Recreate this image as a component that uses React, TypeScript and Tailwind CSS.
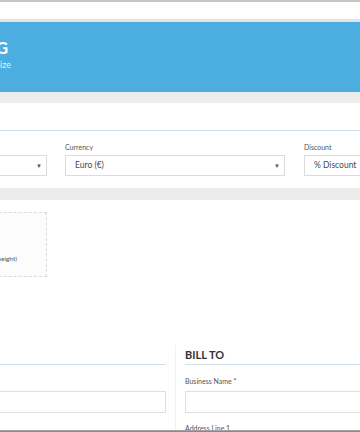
import React from "react";

const font = { fontFamily: "Lato, 'Open Sans', sans-serif" };

const Select = ({ value, width }: { value: string; width: string }) => (
  <div className={`flex h-[21px] ${width} items-center justify-between border border-[#dcdcdc] bg-white pl-[9px] pr-[4px]`}>
    <span className="text-[8.5px] text-[#4a4a4a]">{value}</span>
    <span className="text-[6px] leading-none text-[#555]">▼</span>
  </div>
);

const Field = ({ label }: { label: string }) => (
  <div className="flex flex-col">
    <span className="mb-[5px] text-[7px] leading-[9px] text-[#555]">{label}</span>
    <div className="h-[22px] w-full border border-[#e0e0e0] bg-white" />
  </div>
);

export default function App() {
  return (
    <div className="flex h-[432px] w-[360px] flex-col overflow-hidden bg-white" style={font}>
      <div className="flex-1 overflow-hidden">
        <div className="h-[19px] border-t-2 border-[#c6c6c8] bg-white" />
        <div className="h-[3px] bg-[#e4e4e4]" />

        {/* header band */}
        <div className="h-[70px] bg-[#4badE0] pt-[17px]">
          <div className="ml-[-120px] w-[200px] text-right">
            <div className="pr-[72px] text-[17px] font-bold leading-[18px] text-white">INVOICING</div>
            <div className="mt-[3px] pr-[69px] text-[9px] leading-[10px] text-[#e3f3fb]">Create &amp; organize</div>
          </div>
        </div>

        <div className="h-[11px] bg-[#ececec]" />

        <div className="ml-[-200px] w-[760px]">
          {/* settings */}
          <div className="h-[28px] border-b border-[#cfe1e8]" />
          <div className="flex gap-[18px] pl-[27px] pt-[12px]">
            <div className="flex flex-col">
              <span className="mb-[4px] text-[7px] leading-[8px] text-[#555]">Language</span>
              <Select value="English" width="w-[220px]" />
            </div>
            <div className="flex flex-col">
              <span className="mb-[4px] text-[7px] leading-[8px] text-[#555]">Currency</span>
              <Select value="Euro (€)" width="w-[220px]" />
            </div>
            <div className="ml-[1px] flex flex-col">
              <span className="mb-[4px] text-[7px] leading-[8px] text-[#555]">Discount</span>
              <Select value="% Discount" width="w-[220px]" />
            </div>
          </div>
          <div className="h-[12px]" />
          <div className="h-[12px] bg-[#ececec]" />

          {/* logo */}
          <div className="pl-[27px] pt-[12px]">
            <div className="flex h-[65px] w-[220px] items-end justify-end border border-dashed border-[#dadada] bg-[#fcfcfc] pb-[12px] pr-[29px]">
              <span className="text-[6.5px] text-[#555]">(max 300px width/height)</span>
            </div>
          </div>

          {/* from / bill to */}
          <div className="mt-[68px] flex pl-[26px]">
            <div className="w-[340px]">
              <div className="h-[19px] text-[11px] font-bold text-[#333]">FROM</div>
              <div className="border-b border-[#cfe1e8]" />
              <div className="mt-[12px]">
                <Field label="Business Name *" />
              </div>
            </div>
            <div className="ml-[9px] w-[360px] border-l border-[#f1f1f1] pl-[9px] pr-[10px]">
              <div className="h-[19px] text-[11px] font-bold leading-[19px] text-[#333]">BILL TO</div>
              <div className="border-b border-[#cfe1e8]" />
              <div className="mt-[12px]">
                <Field label="Business Name *" />
              </div>
              <div className="mt-[11px] text-[7px] leading-[9px] text-[#555]">Address Line 1</div>
            </div>
          </div>
        </div>
      </div>
      <div className="h-[2px] bg-gradient-to-b from-[#b0b0b0] to-[#7c7c7c]" />
    </div>
  );
}
